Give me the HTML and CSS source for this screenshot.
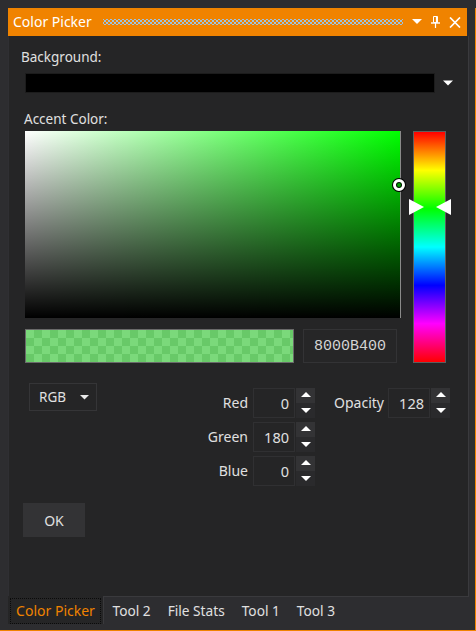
FILE: index.html
```html
<!DOCTYPE html>
<html>
<head>
<meta charset="utf-8">
<link rel="stylesheet" href="styles.css">
</head>
<body>
<div class="frame">
  <div class="window">
    <div class="titlebar">
      <span class="title">Color Picker</span>
      <span class="grip"></span>
      <span class="tb-icons">
        <svg width="10" height="6" viewBox="0 0 10 6"><path d="M0 0h10L5 5z" fill="#fff"/></svg>
        <svg width="9" height="12" viewBox="0 0 9 12"><path d="M2.5 0.5h4v6h-4z" fill="none" stroke="#fff"/><path d="M5.5 0.5v6" stroke="#fff" stroke-width="1.2"/><path d="M0 7h9" stroke="#fff" stroke-width="1.4"/><path d="M4.5 7v5" stroke="#fff" stroke-width="1.2"/></svg>
        <svg width="12" height="11" viewBox="0 0 12 11"><path d="M1 0.5l10 10M11 0.5l-10 10" stroke="#fff" stroke-width="1.7"/></svg>
      </span>
    </div>
    <div class="panel">
      <div class="label bg-label">Background:</div>
      <div class="bg-row">
        <div class="bg-swatch"></div>
        <svg class="bg-arrow" width="10" height="6" viewBox="0 0 10 6"><path d="M0 0.5h10L5 5.5z" fill="#fff"/></svg>
      </div>
      <div class="label accent-label">Accent Color:</div>
      <div class="picker-row">
        <div class="picker-left">
          <div class="field">
            <span class="sel"></span>
          </div>
          <div class="preview-row">
            <div class="preview"></div>
            <div class="hex">8000B400</div>
          </div>
        </div>
        <div class="hue">
          <span class="tri tri-l"></span>
          <span class="tri tri-r"></span>
        </div>
      </div>
      <div class="controls">
        <div class="mode">
          <span>RGB</span>
          <svg width="9" height="5" viewBox="0 0 9 5"><path d="M0 0h9L4.5 4.5z" fill="#e8e8e8"/></svg>
        </div>
        <div class="spins">
          <span class="slabel">Red</span>
          <span class="num">0</span>
          <span class="spin"><i class="up"></i><i class="dn"></i></span>
          <span class="slabel slabel2">Opacity</span>
          <span class="num">128</span>
          <span class="spin"><i class="up"></i><i class="dn"></i></span>

          <span class="slabel">Green</span>
          <span class="num">180</span>
          <span class="spin"><i class="up"></i><i class="dn"></i></span>
          <span class="empty"></span><span class="empty"></span><span class="empty"></span>

          <span class="slabel">Blue</span>
          <span class="num">0</span>
          <span class="spin"><i class="up"></i><i class="dn"></i></span>
        </div>
      </div>
      <div class="ok">OK</div>
    </div>
    <div class="tabs">
      <div class="tab active"><span>Color Picker</span></div>
      <div class="tab">Tool 2</div>
      <div class="tab">File Stats</div>
      <div class="tab">Tool 1</div>
      <div class="tab">Tool 3</div>
    </div>
  </div>
</div>
</body>
</html>
```

FILE: styles.css
```css
html, body {
  margin: 0;
  padding: 0;
}
body {
  background: #2d2d30;
  font-family: "Noto Sans", "Open Sans", sans-serif;
  font-size: 13px;
  color: #e0e0e0;
  width: 476px;
  height: 631px;
  overflow: hidden;
}
.frame {
  height: 631px;
  box-sizing: border-box;
  padding: 8px 0 0 8px;
  border-bottom: 1px solid #f08300;
}
.window {
  width: 468px;
  height: 622px;
  box-sizing: border-box;
  border-right: 1px solid #f08300;
  display: flex;
  flex-direction: column;
}
.titlebar {
  width: 459px;
  height: 28px;
  flex: none;
  background: #f08300;
  display: flex;
  align-items: center;
  color: #fff;
}
.title {
  margin-left: 5px;
  font-size: 14px;
  line-height: 18px;
}
.grip {
  flex: 1;
  height: 6px;
  margin: 0 9px 0 11px;
  background:
    radial-gradient(circle, #9ec3e0 0.9px, transparent 1.3px) 0 0 / 4px 4px,
    radial-gradient(circle, #9ec3e0 0.9px, transparent 1.3px) 2px 2px / 4px 4px;
}
.tb-icons {
  display: flex;
  align-items: center;
  gap: 9px;
  margin-right: 6px;
}
.panel {
  width: 461px;
  flex: 1;
  box-sizing: border-box;
  background: #252526;
  border-left: 1px solid #2f2f33;
  border-right: 1px solid #3a3a3d;
  border-bottom: 1px solid #3a3a3d;
  padding-top: 12px;
}
.label {
  line-height: 18px;
  font-size: 13.5px;
}
.bg-label {
  margin-left: 12px;
}
.bg-row {
  display: flex;
  align-items: center;
  margin-top: 7px;
}
.bg-swatch {
  margin-left: 16px;
  width: 410px;
  height: 20px;
  box-sizing: border-box;
  background: #000;
  border: 1px solid #1c1c1c;
}
.bg-arrow {
  margin-left: 8px;
}
.accent-label {
  margin-left: 15px;
  margin-top: 17px;
}
.picker-row {
  display: flex;
  margin-top: 3px;
  margin-left: 16px;
}
.picker-left {
  width: 376px;
}
.field {
  position: relative;
  height: 187px;
  box-sizing: border-box;
  border-right: 1px solid #8a8a8a;
  background:
    linear-gradient(to bottom, rgba(0,0,0,0), #000),
    linear-gradient(to right, #fff, #00ff00);
}
.sel {
  position: absolute;
  left: 368px;
  top: 48px;
  width: 6px;
  height: 6px;
  border-radius: 50%;
  border: 3px solid #fff;
  box-shadow: 0 0 0 1px #000, inset 0 0 0 1px #000;
  background: #00a000;
}
.preview-row {
  display: flex;
  margin-top: 11px;
  gap: 9px;
}
.preview {
  width: 269px;
  height: 34px;
  box-sizing: border-box;
  border: 1px solid #6a6a6a;
  background-color: #7bd97b;
  background-image:
    linear-gradient(45deg, #68c968 25%, transparent 25%, transparent 75%, #68c968 75%),
    linear-gradient(45deg, #68c968 25%, transparent 25%, transparent 75%, #68c968 75%);
  background-size: 16px 16px;
  background-position: 0 0, 8px 8px;
}
.hex {
  width: 94px;
  height: 34px;
  box-sizing: border-box;
  border: 1px solid #333335;
  background: #262627;
  font-family: "Liberation Mono", monospace;
  font-size: 15px;
  color: #d4d4d4;
  display: flex;
  align-items: center;
  justify-content: center;
}
.hue {
  position: relative;
  margin-left: 12px;
  width: 33px;
  height: 232px;
  box-sizing: border-box;
  border: 1px solid #5e5e5e;
  background: linear-gradient(to bottom, #ff0000 0%, #ffff00 16.67%, #00ff00 33.33%, #00ffff 50%, #0000ff 66.67%, #ff00ff 83.33%, #ff0000 100%);
}
.tri {
  position: absolute;
  top: 67px;
  width: 0;
  height: 0;
  border-top: 8px solid transparent;
  border-bottom: 8px solid transparent;
}
.tri-l {
  left: -5px;
  border-left: 15px solid #fff;
}
.tri-r {
  left: 22px;
  border-right: 15px solid #fff;
}
.controls {
  display: flex;
  align-items: flex-start;
  margin-top: 20px;
}
.mode {
  margin-left: 20px;
  width: 68px;
  height: 28px;
  box-sizing: border-box;
  border: 1px solid #353537;
  display: flex;
  align-items: center;
  font-size: 13.5px;
}
.mode span {
  margin-left: 9px;
  margin-right: 14px;
}
.spins {
  margin-left: 96px;
  margin-top: 5px;
  display: grid;
  grid-template-columns: 60px 43px 19px 73px 43px 19px;
  grid-auto-rows: 30px;
  row-gap: 4px;
}
.slabel {
  font-size: 14px;
  text-align: right;
  padding-right: 5px;
  line-height: 30px;
}
.slabel2 {
  padding-right: 4px;
}
.num {
  width: 42px;
  height: 30px;
  box-sizing: border-box;
  border: 1px solid #303032;
  font-size: 14.5px;
  text-align: right;
  padding-right: 5px;
  line-height: 28px;
}
.spin {
  display: flex;
  flex-direction: column;
  width: 19px;
  height: 30px;
}
.spin i {
  flex: 1;
  display: block;
  position: relative;
}
.spin .up {
  background: #333335;
}
.spin .dn {
  background: #2a2a2c;
}
.spin .up::after, .spin .dn::after {
  content: "";
  position: absolute;
  left: 5px;
  width: 0;
  height: 0;
  border-left: 5px solid transparent;
  border-right: 5px solid transparent;
}
.spin .up::after {
  top: 4px;
  border-bottom: 5px solid #fff;
}
.spin .dn::after {
  top: 5px;
  border-top: 5px solid #fff;
}
.ok {
  margin: 17px 0 0 14px;
  width: 62px;
  height: 34px;
  background: #333335;
  display: flex;
  align-items: center;
  justify-content: center;
  font-size: 14px;
}
.tabs {
  height: 33px;
  flex: none;
  display: flex;
  align-items: flex-start;
}
.tab {
  height: 27px;
  line-height: 27px;
  padding: 0 8.5px;
  font-size: 13.7px;
  color: #e0e0e0;
}
.tab.active {
  margin-top: -1px;
  height: 28px;
  width: 96px;
  box-sizing: border-box;
  padding: 2px;
  background: #252526;
  border-right: 1px solid #3a3a3d;
  color: #f08300;
  margin-right: 0;
}
.tab.active span {
  display: block;
  height: 24px;
  line-height: 24px;
  border: 1px dotted #0a0a0a;
  text-align: center;
  font-size: 14px;
}
```
